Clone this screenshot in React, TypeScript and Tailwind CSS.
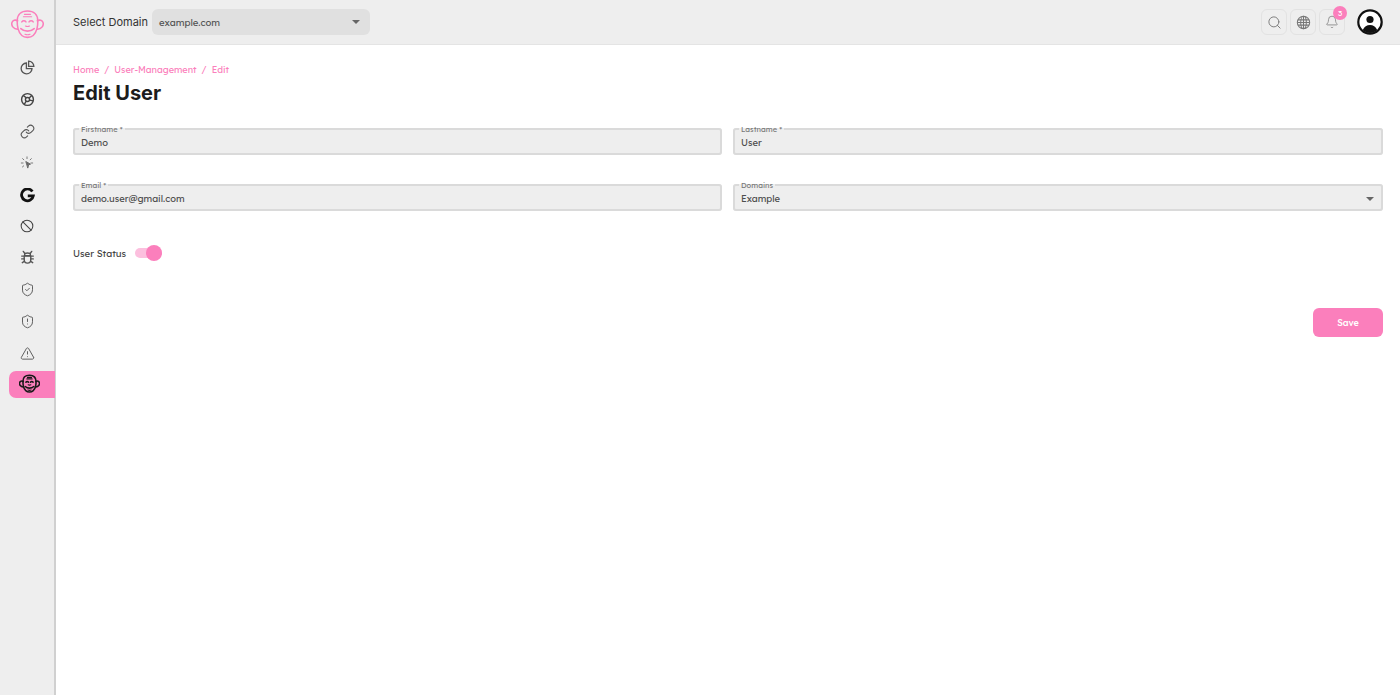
import { Bell, Ban, Link, Search, ShieldAlert, ShieldCheck, TriangleAlert } from "lucide-react";

const font = "font-['Lexend','Inter','Noto_Sans',sans-serif]";

function MonkFace({ stroke, size, weight = 1.5 }: { stroke: string; size: number; weight?: number }) {
  return (
    <svg width={size} height={size} viewBox="0 0 32 32" fill="none" stroke={stroke} strokeWidth={weight} strokeLinecap="round">
      <path d="M6.500 11.500C4.500 10 1.300 11 .8 13.500c-.5 2.800 1.700 6 5.500 6.200" />
      <path d="M25.500 11.500c2-1.500 5.200-.5 5.700 2 .5 2.800-1.700 6-5.500 6.200" />
      <path d="M16 2C10 2 6 5.500 6 11.500c0 2 0 5 .8 7.500C8 23.500 10 27.500 16 27.500s8-4 9.200-8.500c.8-2.500.8-5.500.8-7.500C26 5.500 22 2 16 2z" />
      <path d="M10.500 12.500c1-1.400 3-1.400 4 0M17.500 12.500c1-1.400 3-1.400 4 0" />
      <path d="M12 7.500h8M13 5.200h6" strokeWidth={weight * 0.7} />
      <path d="M9.500 19c3.500 3.300 9.500 3.300 13 0" />
      <path d="M14 16.500c1.200.6 2.800.6 4 0" strokeWidth={weight * 0.7} />
      <path d="M13.500 24.500c1.500.6 3.500.6 5 0" strokeWidth={weight * 0.7} />
    </svg>
  );
}

function PieIcon() {
  return (
    <svg width="15" height="15" viewBox="0 0 16 16" fill="none" stroke="#555" strokeWidth="1.4">
      <path d="M6.800 3.200a5.800 5.800 0 1 0 6 6H6.800z" />
      <path d="M9.200 1.200a5.600 5.600 0 0 1 5.600 5.600H9.200z" />
    </svg>
  );
}

function ApertureIcon() {
  return (
    <svg width="15" height="15" viewBox="0 0 16 16" fill="none" stroke="#444" strokeWidth="1.5">
      <circle cx="8" cy="8" r="6.300" />
      <circle cx="8" cy="8" r="2.200" />
      <path d="M3.500 3.800l3.300 2.500M12.500 3.800L9.800 6.400M4.500 13.200l2.200-3.400M14 9.500l-3.800-.8" />
    </svg>
  );
}

function ClickIcon() {
  return (
    <svg width="14" height="14" viewBox="0 0 16 16" fill="none" stroke="#777" strokeWidth="1.100" strokeLinecap="round">
      <path d="M8 1v2M3 3l1.400 1.400M13 3l-1.400 1.400M1.500 8h2M12.500 8h2M2.800 12.500l1.400-1.200" />
      <path d="M7 6.500l5 2.800-2.200.8-.8 3.300z" fill="#666" stroke="#666" />
    </svg>
  );
}

function BugIcon() {
  return (
    <svg width="15" height="15" viewBox="0 0 16 16" fill="none" stroke="#555" strokeWidth="1.500" strokeLinecap="round">
      <path d="M5 4.500c0-1.800 6-1.800 6 0v1.500H5z" />
      <path d="M4.500 6.500h7v4a3.500 3.500 0 0 1-7 0z" />
      <path d="M3.500 1.500L5 3.500M12.500 1.500L11 3.500M1.800 6.500h2.700M14.200 6.500h-2.700M1.800 9.500h2.700M14.200 9.500h-2.700M2.500 13.500l2.200-1.500M13.500 13.500l-2.200-1.500" />
    </svg>
  );
}

function GlobeIcon() {
  return (
    <svg width="15" height="15" viewBox="0 0 16 16" fill="none" stroke="#777" strokeWidth="1.100">
      <circle cx="8" cy="8" r="6.600" />
      <ellipse cx="8" cy="8" rx="3" ry="6.600" />
      <path d="M8 1.400v13.200M2 5.200h12M1.400 8h13.200M2 10.800h12" />
    </svg>
  );
}

function GoogleG() {
  return (
    <svg width="15" height="15" viewBox="0 0 16 16" fill="none" stroke="#111" strokeWidth="3">
      <path d="M13.200 3.800A6.300 6.300 0 1 0 14.200 8.300H8.300" />
    </svg>
  );
}

function NavItem({ children, h = "h-[32px]" }: { children: React.ReactNode; h?: string }) {
  return <div className={`flex ${h} w-full items-center justify-center`}>{children}</div>;
}

function Field({ label, value, select }: { label: string; value: string; select?: boolean }) {
  return (
    <fieldset className="relative h-[30px] min-w-0 rounded-[3px] border-2 border-[#dadada] bg-[#eeeeee] pl-[6px] pr-[7px]">
      <legend className="-ml-[2px] px-[2px] text-[7.500px] leading-[8px] text-[#777]">{label}</legend>
      <div className="mt-[2px] flex h-[16px] items-center justify-between text-[9.400px] text-[#4d4d4d]">
        <span>{value}</span>
        {select && <span className="h-0 w-0 border-x-[4px] border-t-[4px] border-x-transparent border-t-[#666]" />}
      </div>
    </fieldset>
  );
}

function HeaderButton({ children }: { children: React.ReactNode }) {
  return (
    <button className="flex h-[26px] w-[26px] items-center justify-center rounded-[6px] border border-[#e2e2e2]">
      {children}
    </button>
  );
}

export default function App() {
  return (
    <div className={`flex h-[695px] w-[1400px] overflow-hidden bg-white ${font}`}>
      <aside className="flex w-[56px] shrink-0 flex-col items-center border-r-2 border-[#d0d0d0] bg-[#eeeeee] pt-[9px]">
        <NavItem h="h-[33px]">
          <MonkFace stroke="#fb7fbc" size={33} />
        </NavItem>
        <div className="h-[9px]" />
        <NavItem><PieIcon /></NavItem>
        <NavItem><ApertureIcon /></NavItem>
        <NavItem><Link size={15} color="#555" strokeWidth={1.7} /></NavItem>
        <NavItem><ClickIcon /></NavItem>
        <NavItem><GoogleG /></NavItem>
        <NavItem h="h-[30px]"><Ban size={14} color="#444" strokeWidth={1.8} /></NavItem>
        <NavItem><BugIcon /></NavItem>
        <NavItem><ShieldCheck size={15} color="#555" strokeWidth={1.5} /></NavItem>
        <NavItem><ShieldAlert size={15} color="#555" strokeWidth={1.5} /></NavItem>
        <NavItem><TriangleAlert size={15} color="#555" strokeWidth={1.5} /></NavItem>
        <div className="ml-[9px] mt-[2px] flex h-[27px] w-[46px] items-center justify-center self-start rounded-l-[7px] bg-[#fb7fbc] pr-[6px]">
          <MonkFace stroke="#1a1a1a" size={21} weight={2.4} />
        </div>
      </aside>

      <div className="flex min-w-0 flex-1 flex-col">
        <header className="flex h-[45px] shrink-0 items-center border-b border-[#e4e4e4] bg-[#eeeeee] pl-[17px] pr-[17px]">
          <span className="font-['Inter'] text-[11px] text-[#333]">Select Domain</span>
          <div className="ml-[4px] flex h-[26px] w-[218px] items-center justify-between rounded-[6px] bg-[#e0e0e0] pl-[7px] pr-[10px] text-[9.500px] text-[#555]">
            <span>example.com</span>
            <span className="h-0 w-0 border-x-[4px] border-t-[4px] border-x-transparent border-t-[#666]" />
          </div>
          <div className="ml-auto flex items-center gap-[3px]">
            <HeaderButton><Search size={15} color="#777" strokeWidth={1.5} /></HeaderButton>
            <HeaderButton><GlobeIcon /></HeaderButton>
            <div className="relative">
              <HeaderButton><Bell size={14} color="#888" strokeWidth={1.5} /></HeaderButton>
              <span className="absolute -top-[3px] -right-[2px] flex h-[14px] w-[14px] items-center justify-center rounded-full bg-[#fb7fbc] text-[8px] text-white">3</span>
            </div>
            <svg className="ml-[9px]" width="26" height="26" viewBox="0 0 26 26">
              <circle cx="13" cy="13" r="11.700" fill="#fff" stroke="#111" strokeWidth="2.200" />
              <circle cx="13" cy="10.500" r="3.600" fill="#111" />
              <path d="M5.800 21c1.500-3.500 4-5 7.200-5s5.700 1.500 7.200 5c-2 2-4.500 3-7.200 3s-5.200-1-7.200-3z" fill="#111" />
            </svg>
          </div>
        </header>

        <main className="flex-1 px-[17px] pt-[18px]">
          <nav className="flex gap-[5px] text-[9.100px] leading-[14px] text-[#fb7fbc]">
            <span>Home</span><span>/</span><span>User-Management</span><span>/</span><span>Edit</span>
          </nav>
          <h1 className="mt-[3px] font-['Inter'] text-[20px] font-bold leading-[26px] text-[#1c1c1c]">Edit User</h1>

          <div className="mt-[19px] grid grid-cols-[649px_1fr] gap-x-[11px] gap-y-[26px]">
            <Field label="Firstname *" value="Demo" />
            <Field label="Lastname *" value="User" />
            <Field label="Email *" value="demo.user@gmail.com" />
            <Field label="Domains" value="Example" select />
          </div>

          <div className="mt-[35px] flex items-center gap-[9px]">
            <span className="text-[9.500px] text-[#444]">User Status</span>
            <div className="relative h-[10px] w-[27px] rounded-full bg-[#fcbfde]">
              <span className="absolute right-0 top-[-3px] h-[16px] w-[16px] rounded-full bg-[#fb7fbc]" />
            </div>
          </div>

          <div className="mt-[48px] flex justify-end">
            <button className="h-[29px] w-[70px] rounded-[6px] bg-[#fb7fbc] text-[9px] font-medium text-white">Save</button>
          </div>
        </main>
      </div>
    </div>
  );
}
